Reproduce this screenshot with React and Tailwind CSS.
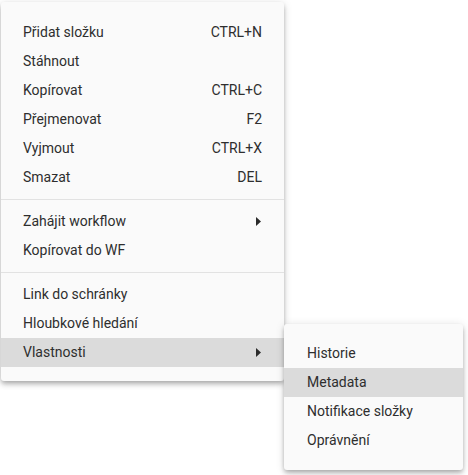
import { Fragment } from 'react'

const groups = [
  [
    { label: 'Přidat složku', shortcut: 'CTRL+N' },
    { label: 'Stáhnout' },
    { label: 'Kopírovat', shortcut: 'CTRL+C' },
    { label: 'Přejmenovat', shortcut: 'F2' },
    { label: 'Vyjmout', shortcut: 'CTRL+X' },
    { label: 'Smazat', shortcut: 'DEL' },
  ],
  [
    { label: 'Zahájit workflow', sub: true },
    { label: 'Kopírovat do WF' },
  ],
  [
    { label: 'Link do schránky' },
    { label: 'Hloubkové hledání' },
    { label: 'Vlastnosti', sub: true, active: true },
  ],
]

const subItems = [
  { label: 'Historie' },
  { label: 'Metadata', active: true },
  { label: 'Notifikace složky' },
  { label: 'Oprávnění' },
]

function Caret() {
  return (
    <svg width="5" height="9" viewBox="0 0 5 9" className="mr-[1px]">
      <path d="M0 0 L5 4.5 L0 9 Z" fill="#2b2b2b" />
    </svg>
  )
}

export default function App() {
  return (
    <div
      className="relative w-[468px] h-[475px] bg-white text-[14px] text-[#2e2e2e]"
      style={{ fontFamily: 'Roboto, "Noto Sans", sans-serif' }}
    >
      <div className="absolute left-[1px] top-[2px] w-[283px] bg-[#fafafa] rounded-[3px] pt-[16px] pb-[14px] shadow-[0_2px_4px_-1px_rgba(0,0,0,0.2),0_4px_5px_0_rgba(0,0,0,0.14),0_1px_10px_0_rgba(0,0,0,0.12)]">
        {groups.map((group, gi) => (
          <Fragment key={gi}>
            {gi > 0 && <div className="h-px bg-[#e2e2e2] my-[7px]" />}
            {group.map((item) => (
              <div
                key={item.label}
                className={`h-[29px] flex items-center justify-between pl-[22px] pr-[22px] ${item.active ? 'bg-[#dbdbdb]' : ''}`}
              >
                <span>{item.label}</span>
                {item.shortcut && <span>{item.shortcut}</span>}
                {item.sub && <Caret />}
              </div>
            ))}
          </Fragment>
        ))}
      </div>

      <div className="absolute left-[284px] top-[324px] w-[179px] bg-[#fafafa] rounded-[3px] py-[15px] shadow-[0_2px_4px_-1px_rgba(0,0,0,0.2),0_4px_5px_0_rgba(0,0,0,0.14),0_1px_10px_0_rgba(0,0,0,0.12)]">
        {subItems.map((item) => (
          <div
            key={item.label}
            className={`h-[29px] flex items-center pl-[23px] ${item.active ? 'bg-[#dbdbdb]' : ''}`}
          >
            {item.label}
          </div>
        ))}
      </div>
    </div>
  )
}
